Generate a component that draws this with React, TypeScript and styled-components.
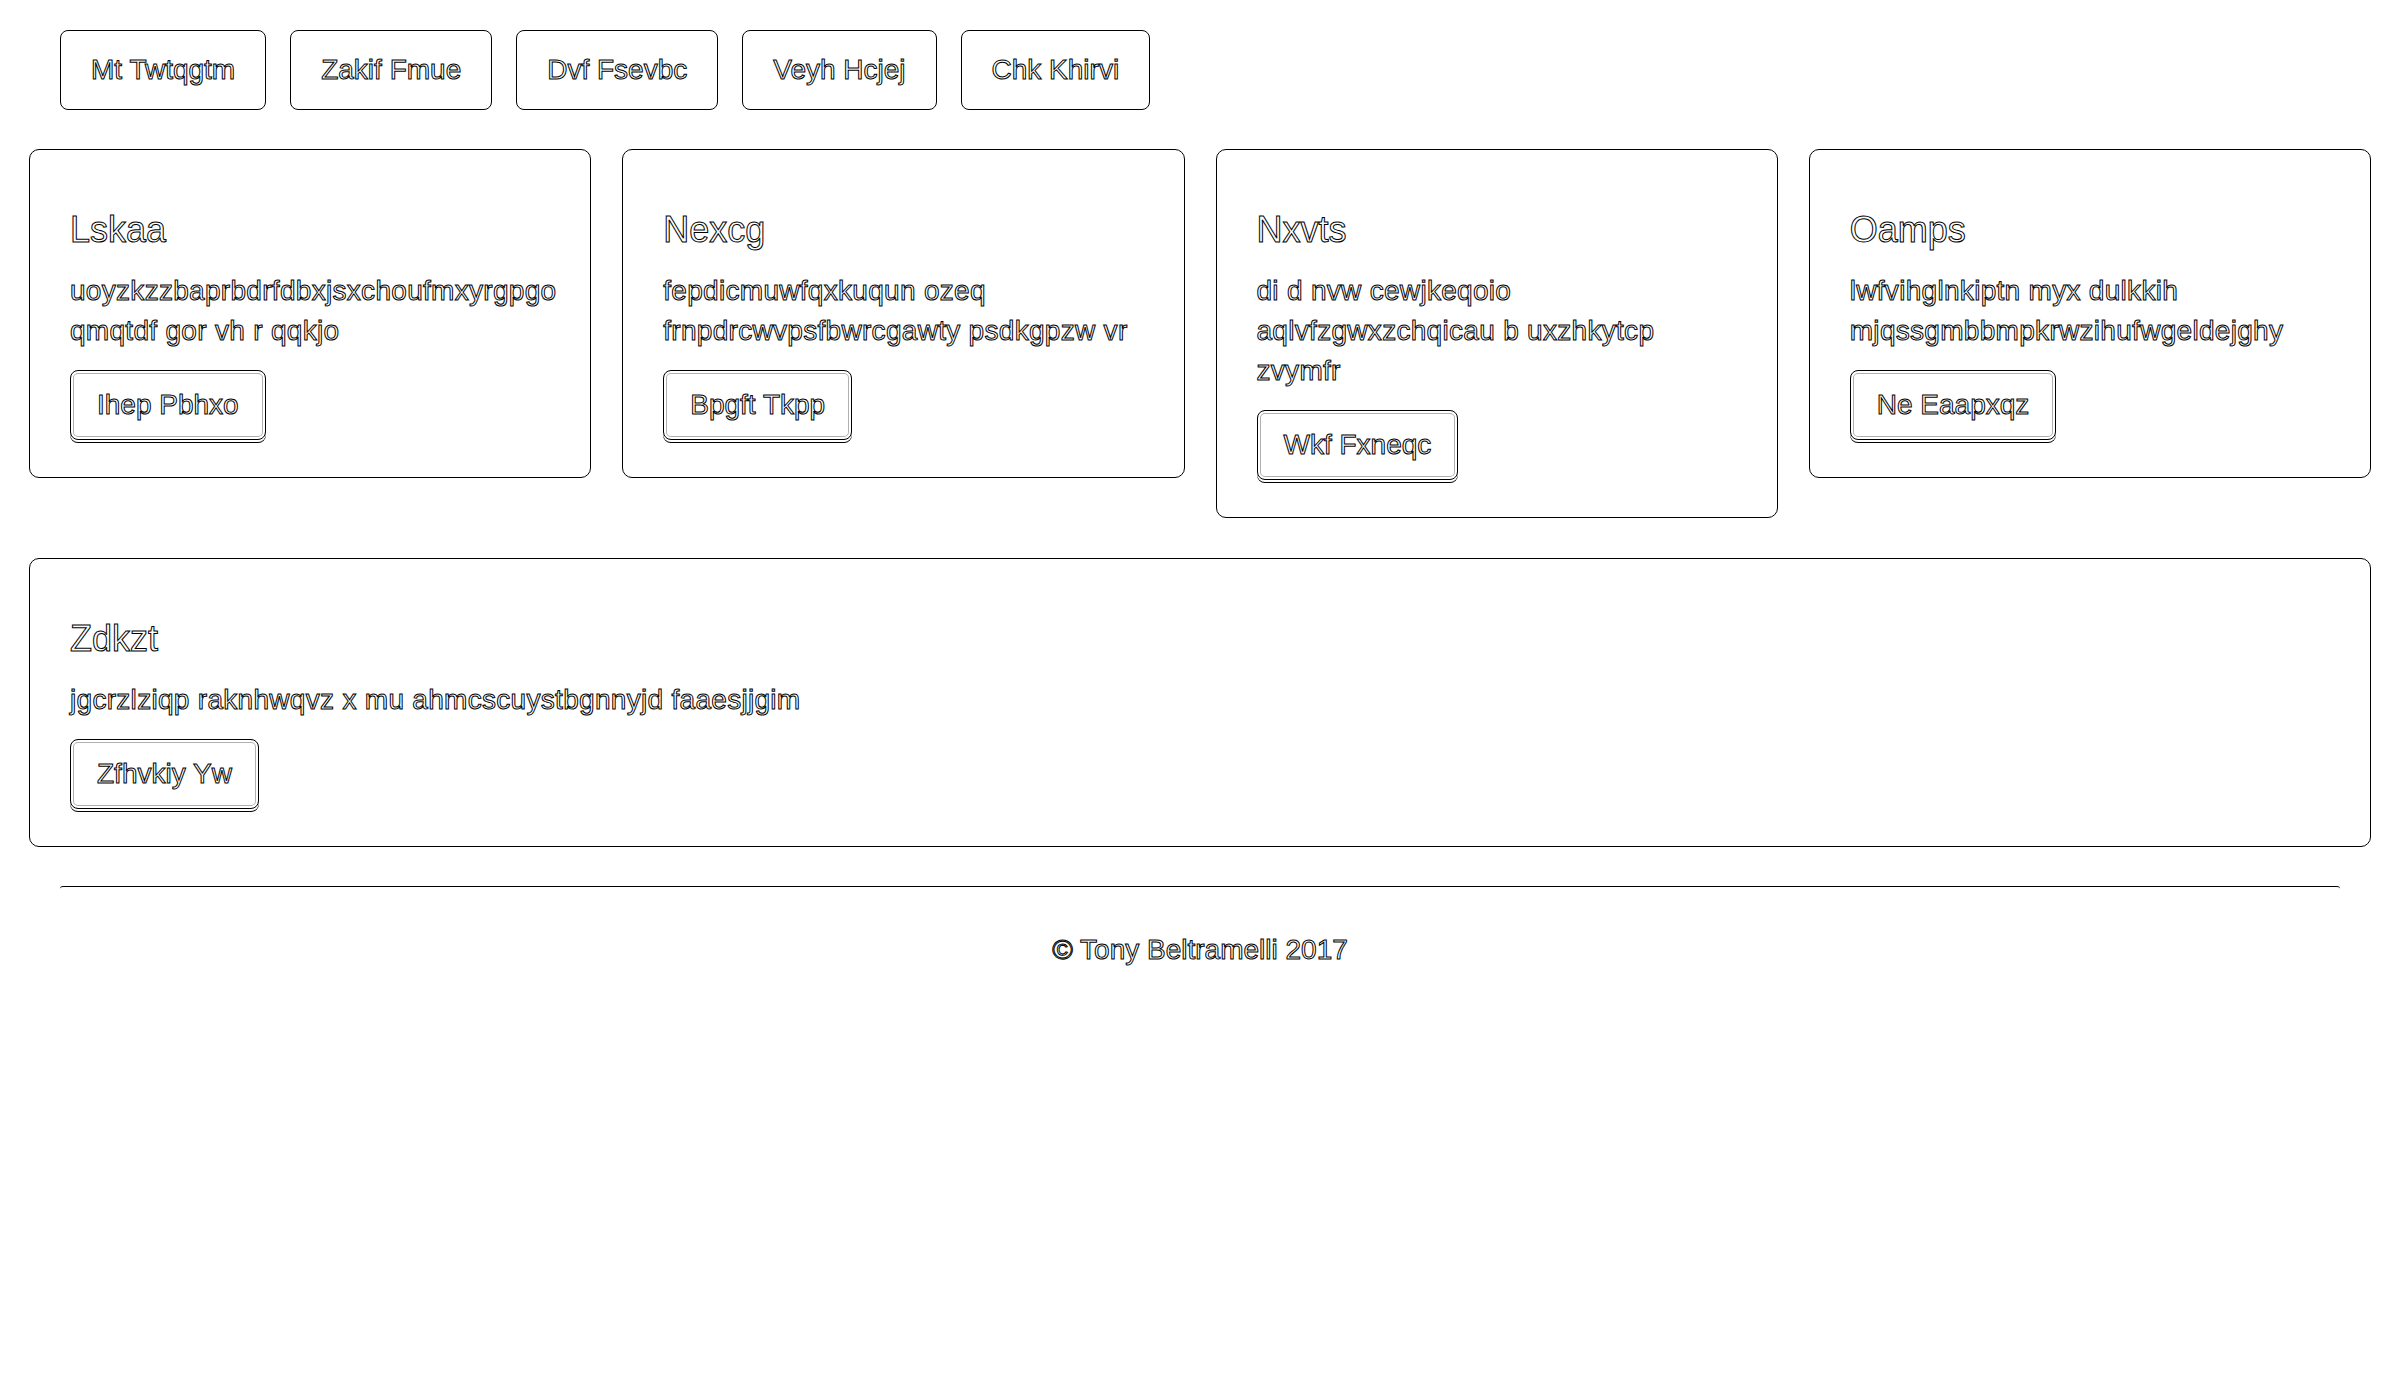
import React from 'react';
import styled, { createGlobalStyle } from 'styled-components';

const GlobalStyle = createGlobalStyle`
  html, body {
    margin: 0;
    padding: 0;
    background: #ffffff;
  }
  body {
    font-family: "Liberation Sans", Arial, sans-serif;
    color: #ffffff;
    -webkit-text-stroke: 1px #000000;
  }
`;

const Page = styled.div`
  padding: 30px 29px 60px;
`;

const Header = styled.header`
  display: flex;
  gap: 24px;
  padding: 0 31px;
`;

const NavButton = styled.button`
  font-family: inherit;
  font-size: 28px;
  line-height: 40px;
  color: #ffffff;
  -webkit-text-stroke: 1px #000000;
  background: #ffffff;
  border: 1px solid #000000;
  border-radius: 8px;
  padding: 19px 30px;
  cursor: pointer;
`;

const Grid = styled.div`
  display: grid;
  grid-template-columns: repeat(4, minmax(0, 1fr));
  column-gap: 31px;
  row-gap: 40px;
  align-items: start;
  margin-top: 39px;
`;

const Card = styled.section<{ $wide?: boolean }>`
  grid-column: ${(p) => (p.$wide ? '1 / -1' : 'auto')};
  min-width: 0;
  border: 1px solid #000000;
  border-radius: 10px;
  padding: 40px 40px 37px;
`;

const Title = styled.h4`
  margin: 20px 0 21px;
  font-size: 36px;
  line-height: 40px;
  font-weight: normal;
`;

const Text = styled.p`
  margin: 0 0 19px;
  font-size: 28px;
  line-height: 40px;
  letter-spacing: 0.3px;
  white-space: nowrap;
`;

const CardButton = styled.button`
  font-family: inherit;
  font-size: 28px;
  line-height: 40px;
  color: #ffffff;
  -webkit-text-stroke: 1px #000000;
  background: #ffffff;
  border: 1px solid #000000;
  border-radius: 8px;
  padding: 14px 26px;
  box-shadow: inset 0 0 0 2px #ffffff, inset 0 0 0 3px #b0b0b0,
    0 2px 0 0 #ffffff, 0 3px 0 0 #000000;
  cursor: pointer;
`;

const Footer = styled.footer`
  margin: 39px 31px 0;
  border-top: 1px solid #000000;
  border-radius: 3px 3px 0 0;
`;

const FooterText = styled.p`
  margin: 43px 0 0;
  text-align: center;
  font-size: 28px;
  line-height: 40px;
`;

const navItems = ['Mt Twtqgtm', 'Zakif Fmue', 'Dvf Fsevbc', 'Veyh Hcjej', 'Chk Khirvi'];

type CardData = { title: string; lines: string[]; button: string; wide?: boolean };

const cards: CardData[] = [
  {
    title: 'Lskaa',
    lines: ['uoyzkzzbaprbdrfdbxjsxchoufmxyrgpgo', 'qmqtdf gor vh r qqkjo'],
    button: 'Ihep Pbhxo',
  },
  {
    title: 'Nexcg',
    lines: ['fepdicmuwfqxkuqun ozeq', 'frnpdrcwvpsfbwrcgawty psdkgpzw vr'],
    button: 'Bpgft Tkpp',
  },
  {
    title: 'Nxvts',
    lines: ['di d nvw cewjkeqoio', 'aqlvfzgwxzchqicau b uxzhkytcp', 'zvymfr'],
    button: 'Wkf Fxneqc',
  },
  {
    title: 'Oamps',
    lines: ['lwfvihglnkiptn myx dulkkih', 'mjqssgmbbmpkrwzihufwgeldejghy'],
    button: 'Ne Eaapxqz',
  },
  {
    title: 'Zdkzt',
    lines: ['jgcrzlziqp raknhwqvz x mu ahmcscuystbgnnyjd faaesjjgim'],
    button: 'Zfhvkiy Yw',
    wide: true,
  },
];

function App() {
  return (
    <>
      <GlobalStyle />
      <Page>
        <Header>
          {navItems.map((label) => (
            <NavButton key={label}>{label}</NavButton>
          ))}
        </Header>

        <Grid>
          {cards.map((card) => (
            <Card key={card.title} $wide={card.wide}>
              <Title>{card.title}</Title>
              <Text>
                {card.lines.map((line, i) => (
                  <React.Fragment key={i}>
                    {i > 0 && <br />}
                    {line}
                  </React.Fragment>
                ))}
              </Text>
              <CardButton>{card.button}</CardButton>
            </Card>
          ))}
        </Grid>

        <Footer>
          <FooterText>© Tony Beltramelli 2017</FooterText>
        </Footer>
      </Page>
    </>
  );
}

export default App;
